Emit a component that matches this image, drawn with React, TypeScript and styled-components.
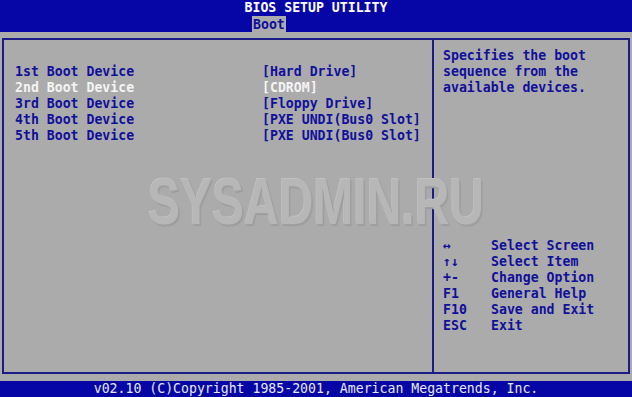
import React from "react";
import styled, { createGlobalStyle } from "styled-components";

const BLUE = "#0606a6";
const GREY = "#ababab";
const INK = "#10109a";
const LINE = "#1c1c86";

const GlobalStyle = createGlobalStyle`
  html, body {
    margin: 0;
    padding: 0;
    background: ${GREY};
  }
  body {
    width: 632px;
    height: 397px;
    overflow: hidden;
    font-family: "DejaVu Sans Mono", "Liberation Mono", monospace;
    font-weight: bold;
    font-size: 13.2px;
  }
`;

const Screen = styled.div`
  position: relative;
  width: 632px;
  height: 397px;
  display: flex;
  flex-direction: column;
  background: ${GREY};
`;

const Header = styled.div`
  height: 32px;
  background: ${BLUE};
  display: flex;
  flex-direction: column;
`;

const Title = styled.div`
  height: 16px;
  line-height: 16px;
  text-align: center;
  color: #ffffff;
`;

const Tabs = styled.div`
  height: 16px;
  display: flex;
  padding-left: 252px;
`;

const Tab = styled.div<{ $active?: boolean }>`
  height: 16px;
  line-height: 17px;
  padding: 0 1px;
  background: ${(p) => (p.$active ? GREY : "transparent")};
  color: ${(p) => (p.$active ? INK : "#ffffff")};
`;

const Panel = styled.div`
  margin: 6px 2px 0 2px;
  height: 336px;
  box-sizing: border-box;
  border: 2px solid ${LINE};
  display: grid;
  grid-template-columns: 430px 1fr;
`;

const Main = styled.div`
  border-right: 2px solid ${LINE};
  padding: 24px 0 0 11px;
`;

const Row = styled.div<{ $selected?: boolean }>`
  display: grid;
  grid-template-columns: 247px 1fr;
  height: 16px;
  line-height: 16px;
  color: ${(p) => (p.$selected ? "#f4f4f4" : INK)};
  white-space: pre;
`;

const Side = styled.div`
  display: flex;
  flex-direction: column;
  justify-content: space-between;
  padding: 8px 0 38px 9px;
  color: ${INK};
`;

const Help = styled.div`
  line-height: 16px;
`;

const Keys = styled.div`
  display: flex;
  flex-direction: column;
`;

const KeyRow = styled.div`
  display: grid;
  grid-template-columns: 48px 1fr;
  height: 16px;
  line-height: 16px;
  white-space: pre;
`;

const Footer = styled.div`
  margin-top: 7px;
  height: 16px;
  line-height: 16px;
  background: ${BLUE};
  color: #e8e8f4;
  text-align: center;
  font-weight: normal;
  white-space: pre;
`;

const Watermark = styled.div`
  position: absolute;
  left: 0;
  right: 0;
  top: 166px;
  text-align: center;
  font-family: "Liberation Sans", Arial, sans-serif;
  font-weight: bold;
  font-size: 64px;
  line-height: 72px;
  color: #b7b7b7;
  text-shadow: 1px 1px 0 #a0a0a0, 2px 2px 1px #9c9c9c, -1px -1px 0 #c0c0c0;
  transform: scaleX(0.75);
  pointer-events: none;
`;

const devices = [
  ["1st Boot Device", "[Hard Drive]"],
  ["2nd Boot Device", "[CDROM]"],
  ["3rd Boot Device", "[Floppy Drive]"],
  ["4th Boot Device", "[PXE UNDI(Bus0 Slot]"],
  ["5th Boot Device", "[PXE UNDI(Bus0 Slot]"],
];

const keys = [
  ["↔", "Select Screen"],
  ["↑↓", "Select Item"],
  ["+-", "Change Option"],
  ["F1", "General Help"],
  ["F10", "Save and Exit"],
  ["ESC", "Exit"],
];

export default function App() {
  return (
    <Screen>
      <GlobalStyle />
      <Header>
        <Title>BIOS SETUP UTILITY</Title>
        <Tabs>
          <Tab $active>Boot</Tab>
        </Tabs>
      </Header>
      <Panel>
        <Main>
          {devices.map(([label, value], i) => (
            <Row key={label} $selected={i === 1}>
              <span>{label}</span>
              <span>{value}</span>
            </Row>
          ))}
        </Main>
        <Side>
          <Help>
            Specifies the boot
            <br />
            sequence from the
            <br />
            available devices.
          </Help>
          <Keys>
            {keys.map(([k, d]) => (
              <KeyRow key={k}>
                <span>{k}</span>
                <span>{d}</span>
              </KeyRow>
            ))}
          </Keys>
        </Side>
      </Panel>
      <Footer>v02.10 (C)Copyright 1985-2001, American Megatrends, Inc.</Footer>
      <Watermark>SYSADMIN.RU</Watermark>
    </Screen>
  );
}
